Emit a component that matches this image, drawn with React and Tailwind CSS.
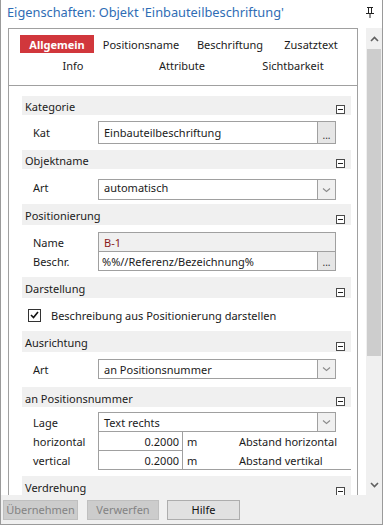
import React from "react";

function Minus() {
  return (
    <div className="absolute right-[6px] bottom-[1px] w-[9px] h-[9px] border border-[#4a4a4a] bg-white flex items-center justify-center">
      <div className="w-[5px] h-px bg-[#222]" />
    </div>
  );
}

function Header({ title, h = "h-[20px]" }) {
  return (
    <div className={`relative ${h} bg-[#f0f0f0] border-b border-white flex items-center pl-[3px] pt-[2px]`}>
      <span>{title}</span>
      <Minus />
    </div>
  );
}

function Chevron() {
  return (
    <svg width="9" height="6" viewBox="0 0 9 6">
      <path d="M1 1.5 L4.5 4.5 L8 1.5" stroke="#8a8a8a" strokeWidth="1.1" fill="none" />
    </svg>
  );
}

function Dots() {
  return (
    <div className="w-[18px] self-stretch border-l border-[#a0a0a0] bg-[#e6e6e6] flex items-end justify-center pb-[3px] text-[10px] leading-none text-[#333]">
      ...
    </div>
  );
}

function Drop() {
  return (
    <div className="w-[18px] self-stretch border-l border-[#a0a0a0] bg-[#f0f0f0] flex items-center justify-center">
      <Chevron />
    </div>
  );
}

function Row({ label, children, cls = "", lcls = "" }) {
  return (
    <div className={`flex items-center ${cls}`}>
      <div className={`w-[76px] pl-[11px] ${lcls}`}>{label}</div>
      {children}
    </div>
  );
}

export default function App() {
  return (
    <div className="w-[383px] h-[525px] bg-white border-x border-b border-[#9a9a9a] flex flex-col overflow-hidden font-['Noto_Sans',sans-serif] text-[11px] text-[#1b1b1b] leading-none">
      {/* title */}
      <div className="h-[28px] shrink-0 flex items-start justify-between pl-[6px] pr-[8px] pt-[6px]">
        <span className="text-[#2f6db5] text-[12.8px] leading-none">Eigenschaften: Objekt 'Einbauteilbeschriftung'</span>
        <svg width="8" height="11" viewBox="0 0 8 11" className="mt-[1px]">
          <rect x="1" y="0" width="6" height="1" fill="#222" />
          <rect x="2" y="1" width="1" height="5" fill="#222" />
          <rect x="5" y="1" width="1" height="5" fill="#222" />
          <rect x="0" y="6" width="8" height="1" fill="#222" />
          <rect x="3.5" y="7" width="1" height="4" fill="#222" />
        </svg>
      </div>

      <div className="flex-1 min-h-0 flex">
        {/* panel */}
        <div className="ml-[7px] w-[350px] border-t border-x border-[#a0a0a0] flex flex-col min-h-0 overflow-hidden">
          {/* tabs */}
          <div className="h-[57px] shrink-0 border-b border-[#a0a0a0] pt-[6px]">
            <div className="flex h-[18px] items-center">
              <div className="ml-[11px] w-[74px] h-[18px] bg-[#d1373c] text-white font-bold flex items-center justify-center">Allgemein</div>
              <div className="ml-[5px] w-[84px] text-center">Positionsname</div>
              <div className="ml-[5px] w-[84px] text-center">Beschriftung</div>
              <div className="ml-[4px] w-[70px] text-center">Zusatztext</div>
            </div>
            <div className="flex h-[18px] items-center mt-[3px]">
              <div className="ml-[14px] w-[100px] text-center">Info</div>
              <div className="ml-[9px] w-[100px] text-center">Attribute</div>
              <div className="ml-[11px] w-[100px] text-center">Sichtbarkeit</div>
            </div>
          </div>

          {/* content */}
          <div className="flex-1 min-h-0 overflow-hidden pt-[10px] pl-[13px] pr-[6px]">
            <Header title="Kategorie" />
            <Row label="Kat" cls="mt-[5px] mb-[6px]">
              <div className="w-[238px] h-[23px] border border-[#a0a0a0] flex items-center">
                <span className="flex-1 pl-[5px]">Einbauteilbeschriftung</span>
                <Dots />
              </div>
            </Row>

            <Header title="Objektname" />
            <Row label="Art" cls="mt-[9px] mb-[4px]" lcls="pb-[5px]">
              <div className="w-[238px] h-[21px] border border-[#a0a0a0] flex items-center">
                <span className="flex-1 pl-[5px] pb-[5px]">automatisch</span>
                <Drop />
              </div>
            </Row>

            <Header title="Positionierung" h="h-[22px]" />
            <Row label="Name" cls="mt-[6px]">
              <div className="w-[238px] h-[20px] border border-[#a0a0a0] bg-[#f0f0f0] flex items-center">
                <span className="flex-1 pl-[5px] text-[#8b1a1a]">B-1</span>
              </div>
            </Row>
            <Row label="Beschr." cls="-mt-px mb-[6px]">
              <div className="w-[238px] h-[20px] border border-[#a0a0a0] flex items-center">
                <span className="flex-1 pl-[3px]">%%//Referenz/Bezeichnung%</span>
                <Dots />
              </div>
            </Row>

            <Header title="Darstellung" h="h-[22px]" />
            <div className="h-[32px] flex items-center pl-[6px]">
              <div className="w-[13px] h-[13px] border border-[#333] bg-white flex items-center justify-center">
                <svg width="9" height="8" viewBox="0 0 9 8">
                  <path d="M1 4 L3.5 6.5 L8 1" stroke="#111" strokeWidth="1.6" fill="none" />
                </svg>
              </div>
              <span className="ml-[10px]">Beschreibung aus Positionierung darstellen</span>
            </div>

            <Header title="Ausrichtung" h="h-[22px]" />
            <Row label="Art" cls="mt-[6px] mb-[8px]">
              <div className="w-[238px] h-[20px] border border-[#a0a0a0] flex items-center">
                <span className="flex-1 pl-[5px]">an Positionsnummer</span>
                <Drop />
              </div>
            </Row>

            <Header title="an Positionsnummer" h="h-[21px]" />
            <Row label="Lage" cls="mt-[4px]">
              <div className="w-[238px] h-[20px] border border-[#a0a0a0] flex items-center">
                <span className="flex-1 pl-[5px]">Text rechts</span>
                <Drop />
              </div>
            </Row>
            <Row label="horizontal" cls="-mt-px">
              <div className="w-[85px] h-[20px] border border-[#a0a0a0] flex items-center justify-end pr-[3px]">0.2000</div>
              <span className="ml-[4px] w-[52px]">m</span>
              <span>Abstand horizontal</span>
            </Row>
            <Row label="vertical" cls="-mt-px">
              <div className="w-[85px] h-[20px] border border-[#a0a0a0] flex items-center justify-end pr-[3px]">0.2000</div>
              <span className="ml-[4px] w-[52px]">m</span>
              <span>Abstand vertikal</span>
            </Row>
            <div className="ml-[76px] h-px bg-[#a0a0a0] -mt-px" />

            <div className="mt-[6px]">
              <Header title="Verdrehung" h="h-[22px]" />
            </div>
          </div>
        </div>

        {/* scrollbar */}
        <div className="ml-[8px] w-[16px] bg-[#f0f0f0] flex flex-col">
          <div className="h-[21px] flex items-center justify-center">
            <svg width="9" height="6" viewBox="0 0 9 6">
              <path d="M1 5 L4.5 1.5 L8 5" stroke="#606060" strokeWidth="1.6" fill="none" />
            </svg>
          </div>
          <div className="h-[307px] mx-px bg-[#cdcdcd]" />
          <div className="flex-1" />
          <div className="h-[20px] flex items-center justify-center">
            <svg width="9" height="6" viewBox="0 0 9 6">
              <path d="M1 1 L4.5 4.5 L8 1" stroke="#606060" strokeWidth="1.6" fill="none" />
            </svg>
          </div>
        </div>
      </div>

      {/* footer */}
      <div className="h-[29px] shrink-0 bg-[#f0f0f0] flex items-center pl-[2px]">
        <div className="w-[75px] h-[20px] bg-[#cccccc] border border-[#bfbfbf] text-[#838383] flex items-center justify-center">Übernehmen</div>
        <div className="ml-[9px] w-[72px] h-[20px] bg-[#cccccc] border border-[#bfbfbf] text-[#838383] flex items-center justify-center">Verwerfen</div>
        <div className="ml-[8px] w-[73px] h-[20px] bg-[#e1e1e1] border border-[#adadad] text-[#111] flex items-center justify-center">Hilfe</div>
      </div>
    </div>
  );
}
